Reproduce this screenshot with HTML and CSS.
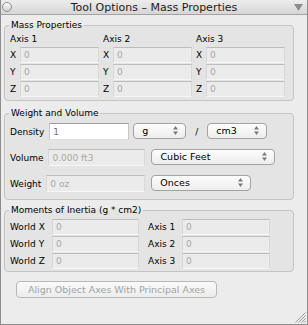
FILE: index.html
```html
<!DOCTYPE html>
<html lang="en">
<head>
    <meta charset="UTF-8">
    <title>Tool Options - Mass Properties</title>
    <link rel="stylesheet" href="styles.css">
</head>
<body>
    <div class="window">
        <div class="titlebar">
            <span class="close"></span>
            <span class="title">Tool Options – Mass Properties</span>
            <svg class="menu-arrow" width="9" height="7" viewBox="0 0 9 7"><polygon points="0,0 9,0 4.5,7" fill="#8c8c8c"/></svg>
        </div>

        <div class="content">
            <fieldset class="group mass">
                <legend>Mass Properties</legend>
                <div class="axes">
                    <div class="axis">
                        <div class="axis-title">Axis 1</div>
                        <div class="row"><span class="xl">X</span><input class="field" type="text" value="0" disabled></div>
                        <div class="row"><span class="xl">Y</span><input class="field" type="text" value="0" disabled></div>
                        <div class="row"><span class="xl">Z</span><input class="field" type="text" value="0" disabled></div>
                    </div>
                    <div class="axis">
                        <div class="axis-title">Axis 2</div>
                        <div class="row"><span class="xl">X</span><input class="field" type="text" value="0" disabled></div>
                        <div class="row"><span class="xl">Y</span><input class="field" type="text" value="0" disabled></div>
                        <div class="row"><span class="xl">Z</span><input class="field" type="text" value="0" disabled></div>
                    </div>
                    <div class="axis">
                        <div class="axis-title">Axis 3</div>
                        <div class="row"><span class="xl">X</span><input class="field" type="text" value="0" disabled></div>
                        <div class="row"><span class="xl">Y</span><input class="field" type="text" value="0" disabled></div>
                        <div class="row"><span class="xl">Z</span><input class="field" type="text" value="0" disabled></div>
                    </div>
                </div>
            </fieldset>

            <fieldset class="group weight">
                <legend>Weight and Volume</legend>
                <div class="wv-row">
                    <span class="wv-label">Density</span>
                    <input class="field live density" type="text" value="1">
                    <div class="popup pop-g"><span>g</span><svg class="updown" width="5" height="9" viewBox="0 0 5 9"><polygon points="2.5,0 5,3.5 0,3.5" /><polygon points="0,5.5 5,5.5 2.5,9" /></svg></div>
                    <span class="slash">/</span>
                    <div class="popup pop-cm"><span>cm3</span><svg class="updown" width="5" height="9" viewBox="0 0 5 9"><polygon points="2.5,0 5,3.5 0,3.5" /><polygon points="0,5.5 5,5.5 2.5,9" /></svg></div>
                </div>
                <div class="wv-row">
                    <span class="wv-label">Volume</span>
                    <input class="field volume" type="text" value="0.000 ft3" disabled>
                    <div class="popup pop-vol"><span>Cubic Feet</span><svg class="updown" width="5" height="9" viewBox="0 0 5 9"><polygon points="2.5,0 5,3.5 0,3.5" /><polygon points="0,5.5 5,5.5 2.5,9" /></svg></div>
                </div>
                <div class="wv-row">
                    <span class="wv-label">Weight</span>
                    <input class="field weight-val" type="text" value="0 oz" disabled>
                    <div class="popup pop-wt"><span>Onces</span><svg class="updown" width="5" height="9" viewBox="0 0 5 9"><polygon points="2.5,0 5,3.5 0,3.5" /><polygon points="0,5.5 5,5.5 2.5,9" /></svg></div>
                </div>
            </fieldset>

            <fieldset class="group moments">
                <legend>Moments of Inertia (g * cm2)</legend>
                <div class="moment-grid">
                    <span class="m-label">World X</span><input class="field" type="text" value="0" disabled>
                    <span class="m-label right">Axis 1</span><input class="field" type="text" value="0" disabled>
                    <span class="m-label">World Y</span><input class="field" type="text" value="0" disabled>
                    <span class="m-label right">Axis 2</span><input class="field" type="text" value="0" disabled>
                    <span class="m-label">World Z</span><input class="field" type="text" value="0" disabled>
                    <span class="m-label right">Axis 3</span><input class="field" type="text" value="0" disabled>
                </div>
            </fieldset>

            <button type="button" class="align-btn" disabled>Align Object Axes With Principal Axes</button>
        </div>

        <svg class="grip" width="11" height="11" viewBox="0 0 11 11">
            <line x1="10.5" y1="0.5" x2="0.5" y2="10.5" stroke="#9a9a9a"/>
            <line x1="10.5" y1="3.5" x2="3.5" y2="10.5" stroke="#9a9a9a"/>
            <line x1="10.5" y1="6.5" x2="6.5" y2="10.5" stroke="#9a9a9a"/>
            <line x1="10.5" y1="9" x2="9" y2="10.5" stroke="#9a9a9a"/>
        </svg>
    </div>
</body>
</html>
```

FILE: styles.css
```css
* {
    box-sizing: border-box;
}
body {
    margin: 0;
    font-family: "DejaVu Sans", sans-serif;
    font-size: 9px;
    color: #000;
    background: #fff;
}
.window {
    width: 308px;
    height: 325px;
    display: flex;
    flex-direction: column;
    border: 1px solid #8d8d8d;
    border-top: none;
    background: #ececec;
}
.titlebar {
    height: 15px;
    display: grid;
    grid-template-columns: 1fr auto 1fr;
    align-items: center;
    border-bottom: 1px solid #a3a3a3;
    background: linear-gradient(#ededed, #d6d6d6);
}
.close {
    width: 10px;
    height: 10px;
    margin-left: 1px;
    border-radius: 50%;
    border: 1px solid #909090;
    background: linear-gradient(#fbfbfb, #cfcfcf);
}
.title {
    font-size: 11px;
    color: #1c1c1c;
}
.menu-arrow {
    justify-self: end;
    margin-right: 4px;
}
.content {
    padding: 5px 13px 0 3px;
}
.group {
    margin: 0;
    min-width: 0;
    padding: 0 4px 3px 5px;
    border: 1px solid #c4c4c4;
    border-radius: 4px;
    background: #e4e4e4;
}
.group legend {
    margin-left: -1px;
    padding: 0 2px;
    line-height: 11px;
    font-size: 9px;
}
.axes {
    display: flex;
}
.axis {
    width: 96px;
    display: flex;
    flex-direction: column;
    gap: 1px;
}
.axis-title {
    line-height: 12px;
    padding-top: 2px;
    margin-bottom: 1px;
}
.row {
    display: flex;
    align-items: center;
}
.xl {
    width: 10px;
}
.field {
    font-family: inherit;
    font-size: 9px;
    width: 79px;
    height: 16px;
    margin: 0;
    padding: 0 3px;
    border: 1px solid;
    border-color: #bdbdbd #d8d8d8 #f7f7f7 #d8d8d8;
    background: #ebebeb;
    color: #a8a8a8;
}
.field.live {
    background: #fff;
    color: #707070;
    border-color: #9c9c9c #c6c6c6 #dedede #c6c6c6;
}
.weight {
    margin-top: 7px;
    padding: 4px 4px 7px 5px;
}
.wv-row {
    display: flex;
    align-items: center;
    height: 17px;
}
.wv-row + .wv-row {
    margin-top: 9px;
}
.wv-label {
    margin-right: 5px;
}
.wv-row .field {
    height: 17px;
}
.density {
    width: 80px;
}
.volume {
    width: 97px;
}
.weight-val {
    width: 99px;
}
.popup {
    height: 16px;
    margin-top: -2px;
    display: flex;
    align-items: center;
    justify-content: space-between;
    padding: 0 7px 0 8px;
    border: 1px solid #a2a2a2;
    border-radius: 4px;
    background: linear-gradient(#fdfdfd, #ededed);
    font-size: 9.5px;
}
.updown {
    fill: #7a7a7a;
}
.pop-g {
    width: 53px;
    margin-left: 4px;
}
.slash {
    width: 21px;
    text-align: center;
}
.pop-cm {
    width: 60px;
}
.pop-vol {
    width: 124px;
    margin-left: 6px;
}
.pop-wt {
    width: 100px;
    margin-left: 6px;
}
.moments {
    margin-top: 5px;
    padding: 3px 4px 2px 5px;
}
.moment-grid {
    display: grid;
    grid-template-columns: 42px 87px 43px 88px;
    row-gap: 1px;
    align-items: center;
}
.moment-grid .field {
    width: 100%;
}
.m-label.right {
    padding-left: 9px;
}
.align-btn {
    margin: 9px 0 0 12px;
    width: 201px;
    height: 17px;
    padding: 0;
    font-family: inherit;
    font-size: 9.5px;
    color: #a3a3a3;
    border: 1px solid #b8b8b8;
    border-radius: 4px;
    background: linear-gradient(#fafafa, #ececec);
}
.grip {
    margin-top: auto;
    align-self: flex-end;
    margin-right: 1px;
    margin-bottom: 1px;
}
```
